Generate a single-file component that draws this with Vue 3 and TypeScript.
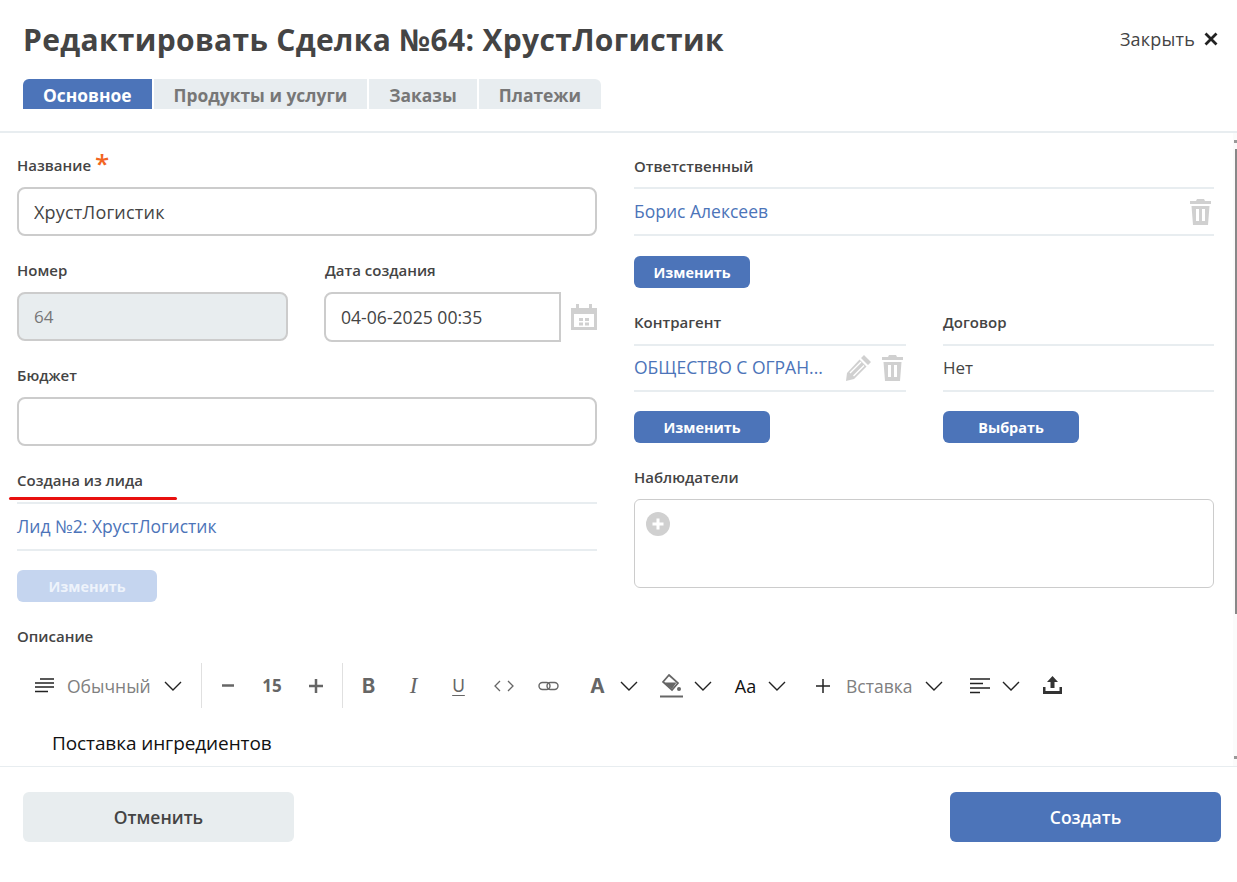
<template>
  <div class="modal">
    <header class="modal-head">
      <div class="head-row">
        <h1 class="title">Редактировать Сделка №64: ХрустЛогистик</h1>
        <button class="close">
          <span>Закрыть</span>
          <svg width="14" height="14" viewBox="0 0 14 14"><path d="M1.500 1.500l11 11M12.500 1.500l-11 11" stroke="#222" stroke-width="2.800" fill="none" /></svg>
        </button>
      </div>
      <nav class="tabs">
        <a v-for="tab in tabs" :key="tab" class="tab" :class="{ active: tab === 'Основное' }">{{ tab }}</a>
      </nav>
    </header>

    <main class="modal-body">
      <div class="scrollbar">
        <i class="arrow up"></i>
        <i class="thumb"></i>
        <i class="arrow down"></i>
      </div>
      <div class="columns">
        <section class="col">
          <label class="label">Название <span class="req">*</span></label>
          <input class="input" value="ХрустЛогистик" readonly />

          <div class="split">
            <div>
              <label class="label">Номер</label>
              <input class="input disabled" value="64" readonly />
            </div>
            <div>
              <label class="label">Дата создания</label>
              <div class="date-row">
                <input class="input date" value="04-06-2025 00:35" readonly />
                <svg class="cal" width="26" height="26" viewBox="0 0 26 26"><path fill="#d0d0d0" d="M0 4h5V0h3v4h10V0h3v4h5v22H0zM3 10v13h20V10z" fill-rule="evenodd" /><path fill="#d0d0d0" d="M8 14h4v3H8zM14 14h4v3h-4zM8 18.500h4v3H8zM14 18.500h4v3h-4z" /></svg>
              </div>
            </div>
          </div>

          <label class="label gap">Бюджет</label>
          <input class="input" value="" readonly />

          <div class="marked">
            <label class="label gap">Создана из лида</label>
            <div class="red-mark"></div>
          </div>
          <div class="value-row"><a class="link">Лид №2: ХрустЛогистик</a></div>
          <button class="btn off wide">Изменить</button>
        </section>

        <section class="col right">
          <label class="label first">Ответственный</label>
          <div class="value-row">
            <a class="link">Борис Алексеев</a>
            <svg class="ico-end" width="21" height="26" viewBox="0 0 21 26"><path fill="#d0d0d0" d="M7 0h7l1 2h6v3H0V2h6zM1.500 7h18L18 26H3zM6 10v12h3V10zM12 10v12h3V10z" fill-rule="evenodd" /></svg>
          </div>
          <button class="btn small first-btn">Изменить</button>

          <div class="split even">
            <div>
              <label class="label gap">Контрагент</label>
              <div class="value-row">
                <a class="link clip">ОБЩЕСТВО С ОГРАН...</a>
                <svg class="pencil" width="26" height="26" viewBox="0 0 26 26"><path fill="#d0d0d0" d="M19 0l7 7-3 3-7-7zM14.500 4.500l7 7L9 24l-8 2 1-8z" /><path stroke="#fff" stroke-width="1.400" d="M5 18l11-11M8.500 21L19 10.500" /></svg>
                <svg class="ico-end" width="21" height="26" viewBox="0 0 21 26"><path fill="#d0d0d0" d="M7 0h7l1 2h6v3H0V2h6zM1.500 7h18L18 26H3zM6 10v12h3V10zM12 10v12h3V10z" fill-rule="evenodd" /></svg>
              </div>
              <button class="btn wide">Изменить</button>
            </div>
            <div>
              <label class="label gap">Договор</label>
              <div class="value-row"><span class="plain">Нет</span></div>
              <button class="btn wide">Выбрать</button>
            </div>
          </div>

          <label class="label gap">Наблюдатели</label>
          <div class="watchers">
            <svg width="24" height="24" viewBox="0 0 24 24"><circle cx="12" cy="12" r="12" fill="#d0d0d0" /><path d="M12 6.500v11M6.500 12h11" stroke="#fff" stroke-width="3" /></svg>
          </div>
        </section>
      </div>

      <label class="label gap">Описание</label>
      <div class="toolbar">
        <div class="group first-group">
          <svg width="20" height="15" viewBox="0 0 20 15"><path d="M5 1h14M0 5h19M0 9h19M0 13.500h13" stroke="#222" stroke-width="1.500" /></svg>
          <span class="tb-text style-name">Обычный</span>
          <svg class="chev" width="18" height="10" viewBox="0 0 18 10"><path d="M1 1l8 8 8-8" stroke="#222" stroke-width="1.400" fill="none" /></svg>
        </div>
        <div class="sep"></div>
        <div class="group size-group">
          <div class="tool"><svg width="12" height="3" viewBox="0 0 12 3"><path d="M0 1.500h12" stroke="#666" stroke-width="2.500" /></svg></div>
          <div class="tool size">15</div>
          <div class="tool"><svg width="14" height="14" viewBox="0 0 14 14"><path d="M0 7h14M7 0v14" stroke="#666" stroke-width="2.500" /></svg></div>
        </div>
        <div class="sep"></div>
        <div class="group marks">
          <div class="tool"><span class="g-b">B</span></div>
          <div class="tool"><span class="g-i">I</span></div>
          <div class="tool"><span class="g-u">U</span></div>
          <div class="tool"><svg width="20" height="12" viewBox="0 0 20 12"><path d="M6 1L1 6l5 5M14 1l5 5-5 5" stroke="#666" stroke-width="1.300" fill="none" /></svg></div>
          <div class="tool"><svg width="21" height="10" viewBox="0 0 21 10"><rect x="1" y="1.500" width="11" height="7" rx="3.500" stroke="#666" stroke-width="1.400" fill="none" /><rect x="9" y="1.500" width="11" height="7" rx="3.500" stroke="#666" stroke-width="1.400" fill="none" /></svg></div>
        </div>
        <div class="group color-a">
          <div class="tool"><span class="g-a">A</span></div>
          <svg class="chev" width="18" height="10" viewBox="0 0 18 10"><path d="M1 1l8 8 8-8" stroke="#222" stroke-width="1.400" fill="none" /></svg>
        </div>
        <div class="group color-bg">
          <div class="tool"><svg width="23" height="24" viewBox="0 0 23 24"><path d="M9 1l9 8-6 7-9-8z" stroke="#666" stroke-width="1.700" fill="none" /><path d="M3.500 8.500h13L12 15z" fill="#666" /><circle cx="19" cy="15" r="2" fill="#666" /><path d="M0 22.500h23" stroke="#666" stroke-width="2" /></svg></div>
          <svg class="chev" width="18" height="10" viewBox="0 0 18 10"><path d="M1 1l8 8 8-8" stroke="#222" stroke-width="1.400" fill="none" /></svg>
        </div>
        <div class="group case-group">
          <div class="tool case">Aa</div>
          <svg class="chev" width="18" height="10" viewBox="0 0 18 10"><path d="M1 1l8 8 8-8" stroke="#222" stroke-width="1.400" fill="none" /></svg>
        </div>
        <div class="group insert">
          <div class="tool"><svg width="14" height="14" viewBox="0 0 14 14"><path d="M0 7h14M7 0v14" stroke="#222" stroke-width="1.500" /></svg></div>
          <span class="tb-text">Вставка</span>
          <svg class="chev" width="18" height="10" viewBox="0 0 18 10"><path d="M1 1l8 8 8-8" stroke="#222" stroke-width="1.400" fill="none" /></svg>
        </div>
        <div class="group align-group">
          <div class="tool"><svg width="20" height="16" viewBox="0 0 20 16"><path d="M0 1h20M0 5.500h13M0 10h20M0 14.500h10" stroke="#222" stroke-width="1.500" /></svg></div>
          <svg class="chev" width="18" height="10" viewBox="0 0 18 10"><path d="M1 1l8 8 8-8" stroke="#222" stroke-width="1.400" fill="none" /></svg>
        </div>
        <div class="group">
          <div class="tool"><svg class="upload" width="19" height="18" viewBox="0 0 19 18"><path fill="#333" d="M9.500 0L15 6h-3.500v6h-4V6H4zM0 11h2.500v4h14v-4H19v7H0z" /></svg></div>
        </div>
      </div>
      <p class="editor">Поставка ингредиентов</p>
    </main>

    <footer class="modal-foot">
      <button class="foot-btn cancel">Отменить</button>
      <button class="foot-btn save">Создать</button>
    </footer>
  </div>
</template>

<script setup lang="ts">
const tabs: string[] = ['Основное', 'Продукты и услуги', 'Заказы', 'Платежи']
</script>

<style>
html, body {
  background: #fff;
}
</style>

<style scoped>
.modal {
  width: 1237px;
  height: 882px;
  display: flex;
  flex-direction: column;
  font-family: "Open Sans", "Noto Sans", sans-serif;
  color: #444;
  overflow: hidden;
}

.modal-head {
  height: 133px;
  flex: none;
  box-sizing: border-box;
  padding: 0 16px 0 23px;
  border-bottom: 2px solid #e8edf0;
}

.head-row {
  height: 79px;
  display: flex;
  justify-content: space-between;
  align-items: flex-start;
}

.title {
  margin: 20px 0 0;
  font-size: 30px;
  line-height: 40px;
  letter-spacing: 0.33px;
  font-weight: 700;
  color: #444;
}

.close {
  margin-top: 27px;
  display: flex;
  align-items: center;
  gap: 9px;
  padding: 0 3px 0 0;
  border: 0;
  background: none;
  font: inherit;
  font-size: 18px;
  line-height: 24px;
  letter-spacing: 0.2px;
  color: #444;
}

.tabs {
  display: flex;
  gap: 2px;
}

.tab {
  height: 30px;
  line-height: 32px;
  padding: 0 20px;
  background: #e8edf0;
  color: #777;
  font-size: 17.400px;
  font-weight: 700;
}

.tab:first-child {
  border-radius: 6px 0 0 0;
}

.tab:last-child {
  border-radius: 0 6px 0 0;
}

.tab.active {
  background: #4c74b9;
  color: #fff;
}

.modal-body {
  position: relative;
  flex: none;
  height: 633px;
  box-sizing: border-box;
  padding: 23px 23px 0 17px;
  overflow: hidden;
}

.scrollbar {
  position: absolute;
  top: 0;
  right: 0;
  bottom: 0;
  width: 4px;
  background: #fbfbfb;
}

.thumb {
  position: absolute;
  top: 16px;
  right: 0;
  width: 2px;
  height: 465px;
  background: #888;
}

.arrow {
  position: absolute;
  right: 0;
  width: 3px;
  height: 3px;
  background: #999;
}

.arrow.up {
  top: 7px;
}

.arrow.down {
  bottom: 7px;
}

.columns {
  display: grid;
  grid-template-columns: 580px 580px;
  column-gap: 37px;
  align-items: start;
}

.label {
  display: block;
  height: 20px;
  line-height: 18px;
  margin-bottom: 11px;
  font-size: 15px;
  font-weight: 600;
  color: #444;
}

.label.gap {
  margin-top: 25px;
}

.label.first {
  margin-top: 1px;
  margin-bottom: 10px;
}

.req {
  color: #f26522;
  font-size: 26px;
  line-height: 14px;
  vertical-align: -2px;
}

.input {
  display: block;
  width: 100%;
  height: 49px;
  box-sizing: border-box;
  padding: 0 15px;
  border: 2px solid #ccc;
  border-radius: 8px;
  outline: none;
  background: #fff;
  font: inherit;
  font-size: 18px;
  letter-spacing: 0.2px;
  color: #444;
}

.input.disabled {
  background: #e8edef;
  color: #777;
  font-size: 17px;
  letter-spacing: 0;
}

.split {
  display: grid;
  grid-template-columns: 271px 272px;
  column-gap: 37px;
  margin-top: 25px;
}

.split.even {
  grid-template-columns: 272px 271px;
  column-gap: 37px;
  margin-top: 0;
}

.date-row {
  display: flex;
  align-items: center;
  gap: 10px;
  height: 49px;
  margin-left: -1px;
}

.input.date {
  width: 237px;
  height: 50px;
  flex: none;
  align-self: flex-start;
  font-size: 17.600px;
  letter-spacing: 0;
  border-radius: 8px 0 0 8px;
}

.cal {
  flex: none;
}

.marked {
  position: relative;
}

.red-mark {
  position: absolute;
  left: -8px;
  bottom: -9px;
  width: 168px;
  height: 3px;
  border-radius: 2px;
  background: #e8100f;
}

.value-row {
  height: 45px;
  display: flex;
  align-items: center;
  border-top: 2px solid #e8edf0;
  border-bottom: 2px solid #e8edf0;
}

.even .value-row {
  height: 44px;
}

.link {
  color: #4c74b9;
  font-size: 17.500px;
  margin-top: -2px;
}

.link.clip {
  width: 190px;
  white-space: nowrap;
}

.plain {
  font-size: 17px;
  color: #444;
  margin-top: -2px;
}

.ico-end {
  margin-left: auto;
  margin-right: 3px;
}

.pencil {
  margin-left: 21px;
}

.btn {
  display: block;
  height: 32px;
  margin-top: 19px;
  padding: 0;
  border: 0;
  border-radius: 6px;
  background: #4c74b9;
  color: #fff;
  font: inherit;
  font-size: 14.400px;
  font-weight: 700;
}

.btn.first-btn {
  margin-top: 20px;
}

.btn.small {
  width: 116px;
}

.btn.wide {
  width: 136px;
}

.btn.off {
  width: 140px;
  background: #c5d5ef;
  color: #eef3fb;
}

.watchers {
  height: 89px;
  box-sizing: border-box;
  padding: 12px 11px;
  border: 1px solid #ccc;
  border-radius: 6px;
}

.watchers svg {
  display: block;
}

.toolbar {
  display: flex;
  align-items: center;
  height: 45px;
  margin-top: 16px;
}

.group {
  display: flex;
  align-items: center;
  height: 45px;
}

.first-group {
  width: 184px;
  padding-left: 18px;
  box-sizing: border-box;
}

.style-name {
  margin-left: 12px;
  width: 97px;
}

.sep {
  width: 1px;
  height: 45px;
  background: #e0e0e0;
}

.size-group {
  padding: 0 4px;
}

.size-group .tool {
  width: 44px;
}

.marks {
  padding: 0 4px 0 3px;
}

.color-a,
.color-bg {
  margin-right: 11px;
}

.case-group {
  margin-right: 15px;
}

.insert {
  margin-right: 14px;
}

.align-group {
  margin-right: 10px;
}

.tool {
  width: 45px;
  height: 45px;
  display: flex;
  align-items: center;
  justify-content: center;
  color: #666;
}

.chev {
  flex: none;
}

.upload {
  margin-top: -2px;
}

.tb-text {
  font-size: 17.500px;
  color: #808080;
}

.insert .tb-text {
  width: 79px;
  margin-left: 1px;
}

.insert .tool {
  width: 44px;
}

.size {
  font-size: 17px;
  font-weight: 700;
}

.g-b,
.g-a {
  font-family: "Inter", sans-serif;
  font-weight: 700;
  font-size: 20px;
}

.g-i {
  font-family: "Liberation Serif", serif;
  font-style: italic;
  font-size: 23px;
}

.g-u {
  font-family: "Inter", sans-serif;
  font-size: 17px;
  text-decoration: underline;
  text-underline-offset: 3px;
}

.case {
  font-size: 18px;
  color: #111;
}

.editor {
  margin: 23px 0 0 35px;
  font-size: 19px;
  line-height: 24px;
  letter-spacing: -0.1px;
  color: #111;
}

.modal-foot {
  flex: none;
  display: flex;
  justify-content: space-between;
  padding: 25px 16px 0 23px;
  border-top: 1px solid #e8edf0;
}

.foot-btn {
  width: 271px;
  height: 50px;
  border: 0;
  border-radius: 6px;
  font: inherit;
  font-size: 17.500px;
  font-weight: 600;
}

.cancel {
  background: #e8edef;
  color: #444;
}

.save {
  background: #4c74b9;
  color: #fff;
}
</style>
